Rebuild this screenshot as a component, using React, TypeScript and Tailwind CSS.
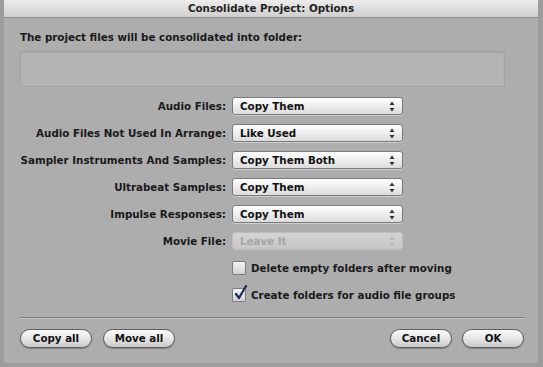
import React from "react";

const font = { fontFamily: '"DejaVu Sans", "Liberation Sans", sans-serif' };

function Arrows({ disabled }: { disabled?: boolean }) {
  const c = disabled ? "#b5b5b5" : "#333";
  return (
    <svg width="6" height="11" viewBox="0 0 6 11" className="shrink-0">
      <path d="M3 0.5 L5.5 4 L0.5 4 Z" fill={c} />
      <path d="M3 10.5 L5.5 7 L0.5 7 Z" fill={c} />
    </svg>
  );
}

function Popup({ value, disabled }: { value: string; disabled?: boolean }) {
  return (
    <div
      className={
        "flex items-center justify-between w-[171px] h-[18px] rounded-[3px] border pl-[7px] pr-[7px] " +
        (disabled
          ? "border-[#bdbdbd] bg-gradient-to-b from-[#d4d4d4] to-[#c6c6c6] text-[#a6a6a6]"
          : "border-[#7a7a7a] bg-gradient-to-b from-[#fdfdfd] via-[#eeeeee] to-[#dcdcdc] text-[#111] shadow-[0_1px_0_rgba(255,255,255,0.4)]")
      }
    >
      <span className="text-[10.3px] font-bold leading-none">{value}</span>
      <Arrows disabled={disabled} />
    </div>
  );
}

function Row({ label, value, disabled }: { label: string; value: string; disabled?: boolean }) {
  return (
    <div className="flex items-center h-[18px]">
      <div className="w-[232px] text-right text-[10.3px] font-bold text-[#1a1a1a] pr-[6px] leading-none whitespace-nowrap">
        {label}
      </div>
      <Popup value={value} disabled={disabled} />
    </div>
  );
}

function Check({ checked, label }: { checked?: boolean; label: string }) {
  return (
    <div className="flex items-center gap-[5px] h-[16px]">
      <div className="relative w-[14px] h-[14px] rounded-[2px] border border-[#7d7d7d] bg-gradient-to-b from-[#f4f4f4] to-[#d2d2d2]">
        {checked && (
          <svg width="16" height="16" viewBox="0 0 16 16" className="absolute -top-[4px] left-[0px]">
            <path d="M3 9 L6 13 L13 1" stroke="#1c2a55" strokeWidth="2.2" fill="none" strokeLinecap="round" strokeLinejoin="round" />
          </svg>
        )}
      </div>
      <span className="text-[10.3px] font-bold text-[#1a1a1a] leading-none">{label}</span>
    </div>
  );
}

function Btn({ label, w }: { label: string; w: string }) {
  return (
    <div
      className={
        "flex items-center justify-center h-[19px] rounded-full border border-[#5e5e5e] bg-gradient-to-b from-[#fbfbfb] via-[#e6e6e6] to-[#c9c9c9] text-[10.3px] font-bold text-[#111] shadow-[0_1px_1px_rgba(0,0,0,0.25)] " +
        w
      }
    >
      {label}
    </div>
  );
}

export default function App() {
  return (
    <div style={font} className="w-[543px] h-[367px] bg-[#9c9c9c] flex flex-col">
      <div className="flex flex-col flex-1 ml-[4px] mr-[5px] mb-[4px] bg-[#adadad]">
        <div className="h-[18px] flex items-center justify-center bg-gradient-to-b from-[#ececec] to-[#cfcfcf] border-b border-[#8f8f8f]">
          <span className="text-[10.3px] font-bold text-[#222] leading-none">Consolidate Project: Options</span>
        </div>
        <div className="flex flex-col px-[16px] pt-[14px]">
          <div className="text-[10.3px] font-bold text-[#1a1a1a] leading-none">
            The project files will be consolidated into folder:
          </div>
          <div className="mt-[9px] h-[36px] w-[485px] rounded-[3px] border border-[#a1a1a1] bg-[#b4b4b4] shadow-[inset_0_1px_1px_rgba(0,0,0,0.08)]" />
        </div>
        <div className="flex flex-col gap-[9px] mt-[10px] -ml-[4px]">
          <Row label="Audio Files:" value="Copy Them" />
          <Row label="Audio Files Not Used In Arrange:" value="Like Used" />
          <Row label="Sampler Instruments And Samples:" value="Copy Them Both" />
          <Row label="Ultrabeat Samples:" value="Copy Them" />
          <Row label="Impulse Responses:" value="Copy Them" />
          <Row label="Movie File:" value="Leave It" disabled />
        </div>
        <div className="flex flex-col gap-[11px] mt-[10px] ml-[228px]">
          <Check label="Delete empty folders after moving" />
          <Check checked label="Create folders for audio file groups" />
        </div>
        <div className="mt-[14px] ml-[16px] mr-[13px] h-px bg-[#7f7f7f] border-b border-[#c4c4c4] box-content" />
        <div className="flex items-center justify-between mt-[10px] pl-[16px] pr-[14px]">
          <div className="flex gap-[11px]">
            <Btn label="Copy all" w="w-[72px]" />
            <Btn label="Move all" w="w-[72px]" />
          </div>
          <div className="flex gap-[10px]">
            <Btn label="Cancel" w="w-[62px]" />
            <Btn label="OK" w="w-[62px]" />
          </div>
        </div>
      </div>
    </div>
  );
}
